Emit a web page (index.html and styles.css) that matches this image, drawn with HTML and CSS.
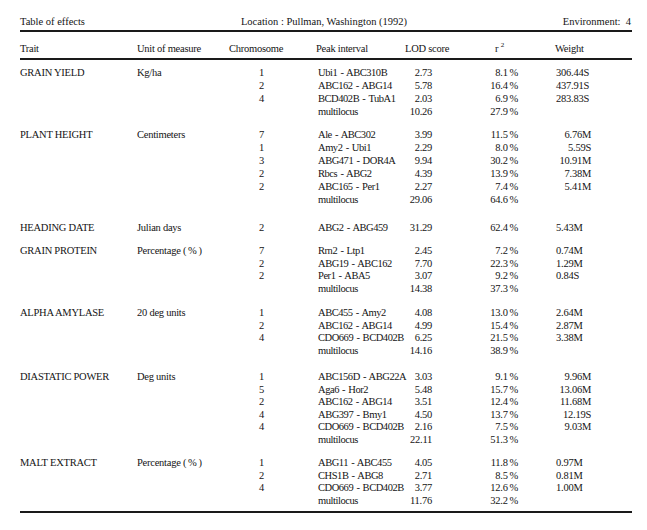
FILE: index.html
```html
<!DOCTYPE html>
<html>
<head>
<meta charset="utf-8">
<link rel="stylesheet" href="styles.css">
</head>
<body>
<div class="page">
  <div class="title">
    <span class="t-left">Table of effects</span>
    <span class="t-mid">Location : Pullman, Washington (1992)</span>
    <span class="t-right">Environment:&nbsp; 4</span>
  </div>
  <table class="effects">
    <colgroup>
      <col class="c-trait"><col class="c-unit"><col class="c-chr"><col class="c-peak"><col class="c-lod"><col class="c-r2"><col class="c-w">
    </colgroup>
    <thead>
      <tr>
        <th>Trait</th><th>Unit of measure</th><th>Chromosome</th><th>Peak interval</th><th>LOD score</th><th class="h-r2">r <sup>2</sup></th><th class="h-w">Weight</th>
      </tr>
    </thead>
    <tbody class="grp first">
      <tr><td>GRAIN YIELD</td><td>Kg/ha</td><td class="chr">1</td><td class="pk">Ubi1 - ABC310B</td><td class="lod">2.73</td><td class="r2">8.1&#8201;%</td><td class="w">306.44S</td></tr>
      <tr><td></td><td></td><td class="chr">2</td><td class="pk">ABC162 - ABG14</td><td class="lod">5.78</td><td class="r2">16.4&#8201;%</td><td class="w">437.91S</td></tr>
      <tr><td></td><td></td><td class="chr">4</td><td class="pk">BCD402B - TubA1</td><td class="lod">2.03</td><td class="r2">6.9&#8201;%</td><td class="w">283.83S</td></tr>
      <tr><td></td><td></td><td></td><td class="pk">multilocus</td><td class="lod">10.26</td><td class="r2">27.9&#8201;%</td><td></td></tr>
    </tbody>
    <tbody class="grp sp9 right">
      <tr><td>PLANT HEIGHT</td><td>Centimeters</td><td class="chr">7</td><td class="pk">Ale - ABC302</td><td class="lod">3.99</td><td class="r2">11.5&#8201;%</td><td class="w">6.76M</td></tr>
      <tr><td></td><td></td><td class="chr">1</td><td class="pk">Amy2 - Ubi1</td><td class="lod">2.29</td><td class="r2">8.0&#8201;%</td><td class="w">5.59S</td></tr>
      <tr><td></td><td></td><td class="chr">3</td><td class="pk">ABG471 - DOR4A</td><td class="lod">9.94</td><td class="r2">30.2&#8201;%</td><td class="w">10.91M</td></tr>
      <tr><td></td><td></td><td class="chr">2</td><td class="pk">Rbcs - ABG2</td><td class="lod">4.39</td><td class="r2">13.9&#8201;%</td><td class="w">7.38M</td></tr>
      <tr><td></td><td></td><td class="chr">2</td><td class="pk">ABC165 - Per1</td><td class="lod">2.27</td><td class="r2">7.4&#8201;%</td><td class="w">5.41M</td></tr>
      <tr><td></td><td></td><td></td><td class="pk">multilocus</td><td class="lod">29.06</td><td class="r2">64.6&#8201;%</td><td></td></tr>
    </tbody>
    <tbody class="grp sp15">
      <tr><td>HEADING DATE</td><td>Julian days</td><td class="chr">2</td><td class="pk">ABG2 - ABG459</td><td class="lod">31.29</td><td class="r2">62.4&#8201;%</td><td class="w">5.43M</td></tr>
    </tbody>
    <tbody class="grp sp11 tight">
      <tr><td>GRAIN PROTEIN</td><td>Percentage (&#8201;%&#8201;)</td><td class="chr">7</td><td class="pk">Rrn2 - Ltp1</td><td class="lod">2.45</td><td class="r2">7.2&#8201;%</td><td class="w">0.74M</td></tr>
      <tr><td></td><td></td><td class="chr">2</td><td class="pk">ABG19 - ABC162</td><td class="lod">7.70</td><td class="r2">22.3&#8201;%</td><td class="w">1.29M</td></tr>
      <tr><td></td><td></td><td class="chr">2</td><td class="pk">Per1 - ABA5</td><td class="lod">3.07</td><td class="r2">9.2&#8201;%</td><td class="w">0.84S</td></tr>
      <tr><td></td><td></td><td></td><td class="pk">multilocus</td><td class="lod">14.38</td><td class="r2">37.3&#8201;%</td><td></td></tr>
    </tbody>
    <tbody class="grp sp12 tight">
      <tr><td>ALPHA AMYLASE</td><td>20 deg units</td><td class="chr">1</td><td class="pk">ABC455 - Amy2</td><td class="lod">4.08</td><td class="r2">13.0&#8201;%</td><td class="w">2.64M</td></tr>
      <tr><td></td><td></td><td class="chr">2</td><td class="pk">ABC162 - ABG14</td><td class="lod">4.99</td><td class="r2">15.4&#8201;%</td><td class="w">2.87M</td></tr>
      <tr><td></td><td></td><td class="chr">4</td><td class="pk">CDO669 - BCD402B</td><td class="lod">6.25</td><td class="r2">21.5&#8201;%</td><td class="w">3.38M</td></tr>
      <tr><td></td><td></td><td></td><td class="pk">multilocus</td><td class="lod">14.16</td><td class="r2">38.9&#8201;%</td><td></td></tr>
    </tbody>
    <tbody class="grp sp14 tight right">
      <tr><td>DIASTATIC POWER</td><td>Deg units</td><td class="chr">1</td><td class="pk">ABC156D - ABG22A</td><td class="lod">3.03</td><td class="r2">9.1&#8201;%</td><td class="w">9.96M</td></tr>
      <tr><td></td><td></td><td class="chr">5</td><td class="pk">Aga6 - Hor2</td><td class="lod">5.48</td><td class="r2">15.7&#8201;%</td><td class="w">13.06M</td></tr>
      <tr><td></td><td></td><td class="chr">2</td><td class="pk">ABC162 - ABG14</td><td class="lod">3.51</td><td class="r2">12.4&#8201;%</td><td class="w">11.68M</td></tr>
      <tr><td></td><td></td><td class="chr">4</td><td class="pk">ABG397 - Bmy1</td><td class="lod">4.50</td><td class="r2">13.7&#8201;%</td><td class="w">12.19S</td></tr>
      <tr><td></td><td></td><td class="chr">4</td><td class="pk">CDO669 - BCD402B</td><td class="lod">2.16</td><td class="r2">7.5&#8201;%</td><td class="w">9.03M</td></tr>
      <tr><td></td><td></td><td></td><td class="pk">multilocus</td><td class="lod">22.11</td><td class="r2">51.3&#8201;%</td><td></td></tr>
    </tbody>
    <tbody class="grp sp11 tight last">
      <tr><td>MALT EXTRACT</td><td>Percentage (&#8201;%&#8201;)</td><td class="chr">1</td><td class="pk">ABG11 - ABC455</td><td class="lod">4.05</td><td class="r2">11.8&#8201;%</td><td class="w">0.97M</td></tr>
      <tr><td></td><td></td><td class="chr">2</td><td class="pk">CHS1B - ABG8</td><td class="lod">2.71</td><td class="r2">8.5&#8201;%</td><td class="w">0.81M</td></tr>
      <tr><td></td><td></td><td class="chr">4</td><td class="pk">CDO669 - BCD402B</td><td class="lod">3.77</td><td class="r2">12.6&#8201;%</td><td class="w">1.00M</td></tr>
      <tr><td></td><td></td><td></td><td class="pk">multilocus</td><td class="lod">11.76</td><td class="r2">32.2&#8201;%</td><td></td></tr>
    </tbody>
  </table>
</div>
</body>
</html>
```

FILE: styles.css
```css
html, body {
  margin: 0;
  padding: 0;
  background: #ffffff;
}

body {
  font-family: "Liberation Serif", "Times New Roman", serif;
  font-size: 10.5px;
  letter-spacing: -0.25px;
  color: #141414;
}

.page {
  width: 612px;
  margin-left: 20px;
}

.title {
  display: grid;
  grid-template-columns: 1fr auto 1fr;
  align-items: end;
  height: 28px;
  padding-bottom: 2px;
  line-height: 13px;
  letter-spacing: 0;
  border-bottom: 2px solid #1a1a1a;
}

.title .t-mid {
  padding-right: 4px;
}

.title .t-right {
  text-align: right;
  padding-right: 1px;
}

.effects {
  width: 612px;
  border-collapse: collapse;
  table-layout: fixed;
  border-bottom: 2px solid #1a1a1a;
}

.c-trait { width: 117px; }
.c-unit { width: 92px; }
.c-chr { width: 87px; }
.c-peak { width: 89px; }
.c-lod { width: 65px; }
.c-r2 { width: 70px; }
.c-w { width: 92px; }

.effects th {
  font-weight: normal;
  text-align: left;
  padding: 10px 0 3px 0;
  line-height: 13px;
  height: 13px;
  border-bottom: 2px solid #1a1a1a;
  white-space: nowrap;
}

.effects th.h-r2 {
  padding-left: 25px;
}

.effects th.h-w {
  padding-left: 15px;
}

.effects th sup {
  font-size: 7px;
  line-height: 0;
  vertical-align: 5px;
}

.effects td {
  padding: 0;
  height: 13px;
  line-height: 13px;
  white-space: nowrap;
  text-align: left;
}

.effects .tight td {
  height: 12.5px;
  line-height: 12.5px;
}

.effects td.chr {
  padding-left: 30px;
}

.effects td.pk {
  padding-left: 2px;
  letter-spacing: -0.45px;
  word-spacing: 1px;
}

.effects td.lod {
  text-align: right;
  padding-right: 38px;
}

.effects td.r2 {
  text-align: right;
  padding-right: 22px;
}

.effects td.w {
  padding-left: 16px;
}

.effects .right td.w {
  text-align: right;
  padding-left: 0;
  padding-right: 41px;
}

.effects .first tr:first-child td { padding-top: 6px; }
.effects .sp9 tr:first-child td { padding-top: 10px; }
.effects .sp11 tr:first-child td { padding-top: 11px; }
.effects .sp12 tr:first-child td { padding-top: 12px; }
.effects .sp14 tr:first-child td { padding-top: 14px; }
.effects .sp15 tr:first-child td { padding-top: 15px; }
.effects .last tr:last-child td { padding-bottom: 4px; }
```
